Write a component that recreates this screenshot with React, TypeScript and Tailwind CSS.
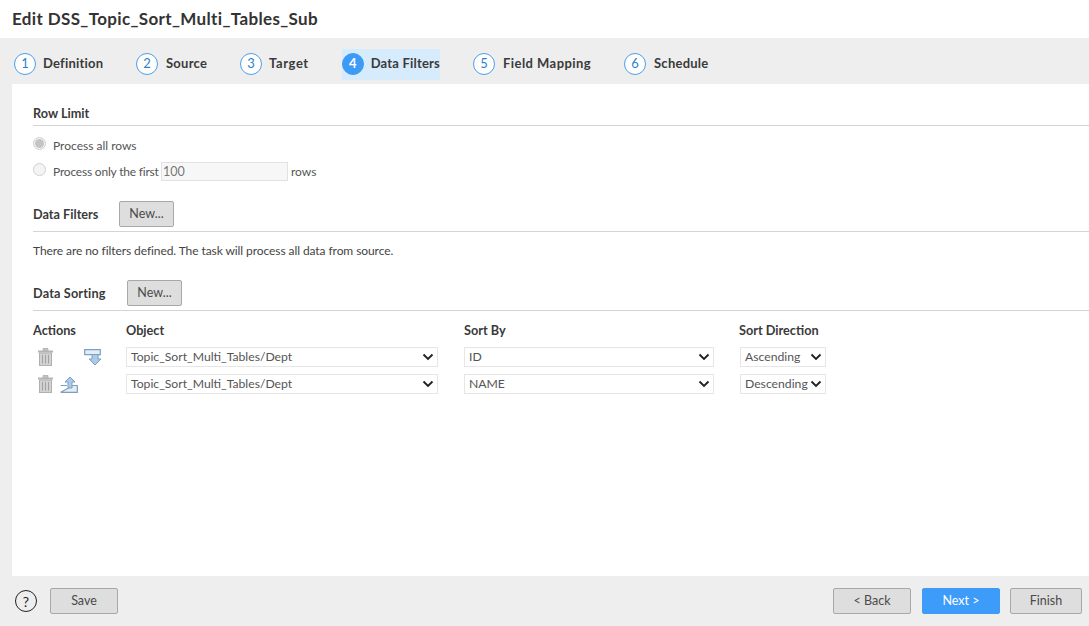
import React from "react";

const font = "font-['Lato','Open_Sans',sans-serif]";

function Step({ n, label, active, w, labelClass }: { n: number; label: string; active?: boolean; w: string; labelClass: string }) {
  return (
    <div className={`shrink-0 ${w}`}>
      <div className={`flex items-center h-[31px] ${active ? "bg-[#d6ebfb] w-[98px]" : ""}`}>
        <div
          className={`w-[22px] h-[22px] rounded-full flex items-center justify-center text-[13px] border ${
            active ? "bg-[#3d9bf5] border-[#3d9bf5] text-white font-bold" : "bg-white border-[#4a9fe8] text-[#2f7fc8]"
          }`}
        >
          {n}
        </div>
        <span className={`text-[13px] font-bold text-[#3a3a3a] whitespace-nowrap ${labelClass}`}>{label}</span>
      </div>
    </div>
  );
}

function Chevron() {
  return (
    <svg width="12" height="8" viewBox="0 0 12 8" className="shrink-0">
      <path d="M1.5 1.5 L6 6 L10.5 1.5" fill="none" stroke="#222" strokeWidth="1.9" />
    </svg>
  );
}

function Select({ text, w }: { text: string; w: string }) {
  return (
    <div className={`${w} h-[20px] bg-white border border-[#e6e6e6] flex items-center justify-between pl-[4px] pr-[3px] text-[12.2px] text-[#555] shrink-0`}>
      <span className="whitespace-nowrap">{text}</span>
      <Chevron />
    </div>
  );
}

function Btn({ label, w, primary, h = "h-[26px]" }: { label: string; w: string; primary?: boolean; h?: string }) {
  return (
    <button
      className={`${w} ${h} rounded-[2px] text-[12.5px] flex items-center justify-center border ${
        primary ? "bg-[#3d9bf9] border-[#3d9bf9] text-white" : "bg-[#dedede] border-[#a8a8a8] text-[#4a4a4a]"
      }`}
    >
      {label}
    </button>
  );
}

function Trash() {
  return (
    <svg width="15" height="18" viewBox="0 0 15 18">
      <path d="M5 0.5h5v2h-5z" fill="#c4c4c4" stroke="#adadad" strokeWidth="0.8" />
      <rect x="0" y="2.5" width="15" height="2" fill="#b4b4b4" />
      <rect x="1.5" y="5" width="12" height="12.5" fill="#d2d2d2" stroke="#b0b0b0" />
      <path d="M4.5 7v8.5M7.5 7v8.5M10.5 7v8.5" stroke="#a2a2a2" strokeWidth="1" />
    </svg>
  );
}

function MoveDown() {
  return (
    <svg width="18" height="17" viewBox="0 0 18 17">
      <path d="M0.7 0.7h15.6v6.6h-1.6v2.7H17l-6 6-6-6h3V6H0.7z" fill="#e4ecf4" />
      <path d="M0.7 0.7h15.6v5H0.7z" fill="none" stroke="#7c9fc2" strokeWidth="1.2" />
      <path d="M8 6v4H5l6 6 6-6h-3V6" fill="#acc9e8" stroke="#7c9fc2" strokeWidth="1" />
    </svg>
  );
}

function MoveUp() {
  return (
    <svg width="18" height="17" viewBox="0 0 18 17">
      <path d="M0.7 9.5h6.3M13 9.5h4.3v6.8H0.7z" fill="#e4ecf4" stroke="#7c9fc2" strokeWidth="1.2" />
      <path d="M10 1l5 5h-3v6H8V6H5z" fill="#acc9e8" stroke="#7c9fc2" strokeWidth="1" />
    </svg>
  );
}

function Radio({ checked }: { checked?: boolean }) {
  return (
    <span className="w-[13px] h-[13px] mb-[2px] rounded-full border border-[#d0d0d0] bg-[#f4f4f4] flex items-center justify-center shrink-0">
      {checked && <span className="w-[9px] h-[9px] rounded-full bg-[#c4c4c4]" />}
    </span>
  );
}

export default function App() {
  return (
    <div className={`${font} w-[1089px] h-[626px] flex flex-col bg-[#eeeeee] overflow-hidden text-[#3a3a3a]`}>
      <div className="h-[38px] bg-white flex items-center pl-[12px] shrink-0">
        <h1 className="text-[17px] font-bold tracking-[0.36px] text-[#333]">Edit DSS_Topic_Sort_Multi_Tables_Sub</h1>
      </div>

      <div className="h-[46px] flex items-center pl-[14px] pt-[6px] shrink-0">
        <Step n={1} label="Definition" w="w-[122px]" labelClass="ml-[7px] tracking-[0.2px]" />
        <Step n={2} label="Source" w="w-[104px]" labelClass="ml-[8px] tracking-[0.25px]" />
        <Step n={3} label="Target" w="w-[102px]" labelClass="ml-[7px] tracking-[0.6px]" />
        <Step n={4} label="Data Filters" active w="w-[131px]" labelClass="ml-[7px] tracking-[0.2px]" />
        <Step n={5} label="Field Mapping" w="w-[151px]" labelClass="ml-[8px] tracking-[0.45px]" />
        <Step n={6} label="Schedule" w="w-[90px]" labelClass="ml-[8px] tracking-[0.25px]" />
      </div>

      <div className="ml-[12px] h-[492px] bg-white pl-[21px] shrink-0 text-[12px]">
        <div className="h-[42px] flex items-end pb-[2px] border-b border-[#d4d4d4] font-bold text-[12.7px]">Row Limit</div>

        <div className="flex items-center mt-[9px] h-[18px] text-[#555]">
          <Radio checked />
          <span className="ml-[7px] mt-[3px]">Process all rows</span>
        </div>
        <div className="flex items-center mt-[8px] h-[19px] text-[#555]">
          <Radio />
          <span className="ml-[7px] mt-[2px] w-[105px] whitespace-nowrap tracking-[-0.2px]">Process only the first</span>
          <div className="ml-[3px] mt-[2px] w-[127px] h-[19px] bg-[#f7f7f7] border border-[#e2e2e2] pl-[1px] pt-[2px] flex items-center text-[#777] text-[12.5px]">100</div>
          <span className="ml-[3px] mt-[2px]">rows</span>
        </div>

        <div className="mt-[21px] h-[31px] flex items-start border-b border-[#d4d4d4]">
          <span className="font-bold text-[12.7px] w-[86px] mt-[4px]">Data Filters</span>
          <Btn label="New..." w="w-[55px]" />
        </div>

        <p className="mt-[10px] h-[18px] leading-[18px] tracking-[-0.08px] text-[#444]">There are no filters defined. The task will process all data from source.</p>

        <div className="mt-[20px] h-[31px] flex items-start border-b border-[#d4d4d4]">
          <span className="font-bold text-[12.7px] tracking-[0.15px] w-[94px] mt-[4px]">Data Sorting</span>
          <Btn label="New..." w="w-[55px]" />
        </div>

        <div className="flex items-center mt-[11px] h-[18px] font-bold text-[12.7px]">
          <span className="w-[93px]">Actions</span>
          <span className="w-[338px]">Object</span>
          <span className="w-[275px]">Sort By</span>
          <span>Sort Direction</span>
        </div>

        <div className="flex items-center mt-[7px] h-[20px]">
          <div className="w-[93px] flex items-center">
            <span className="ml-[5px] flex"><Trash /></span>
            <span className="ml-[31px] flex"><MoveDown /></span>
          </div>
          <Select text="Topic_Sort_Multi_Tables/Dept" w="w-[312px]" />
          <span className="w-[26px]" />
          <Select text="ID" w="w-[250px]" />
          <span className="w-[26px]" />
          <Select text="Ascending" w="w-[86px]" />
        </div>
        <div className="flex items-center mt-[7px] h-[20px]">
          <div className="w-[93px] flex items-center">
            <span className="ml-[5px] flex"><Trash /></span>
            <span className="ml-[7px] flex"><MoveUp /></span>
          </div>
          <Select text="Topic_Sort_Multi_Tables/Dept" w="w-[312px]" />
          <span className="w-[26px]" />
          <Select text="NAME" w="w-[250px]" />
          <span className="w-[26px]" />
          <Select text="Descending" w="w-[86px]" />
        </div>
      </div>

      <div className="flex-1 flex items-center pl-[15px] pr-[7px]">
        <div className="w-[22px] h-[22px] rounded-full border-[1.5px] border-[#222] flex items-center justify-center text-[14px] text-[#222]">?</div>
        <span className="ml-[13px]"><Btn label="Save" w="w-[68px]" /></span>
        <div className="flex-1" />
        <Btn label="< Back" w="w-[78px]" />
        <span className="ml-[11px]"><Btn label="Next >" w="w-[78px]" primary /></span>
        <span className="ml-[10px]"><Btn label="Finish" w="w-[72px]" /></span>
      </div>
    </div>
  );
}
